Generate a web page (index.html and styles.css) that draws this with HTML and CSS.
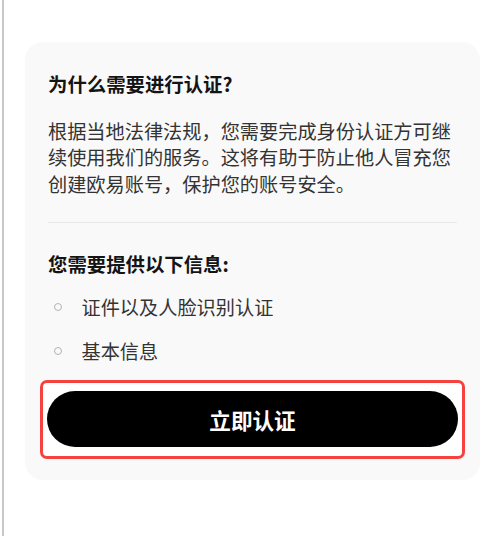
FILE: index.html
```html
<!DOCTYPE html>
<html lang="zh-CN">
<head>
<meta charset="utf-8">
<title>认证</title>
<link rel="stylesheet" href="styles.css">
</head>
<body>
<div class="frame">
  <section class="card">
    <h2 class="title">为什么需要进行认证?</h2>
    <p class="desc">根据当地法律法规，您需要完成身份认证方可继续使用我们的服务。这将有助于防止他人冒充您创建欧易账号，保护您的账号安全。</p>
    <div class="divider"></div>
    <h2 class="subtitle">您需要提供以下信息:</h2>
    <ul class="list">
      <li class="item"><span class="dot"></span><span>证件以及人脸识别认证</span></li>
      <li class="item"><span class="dot"></span><span>基本信息</span></li>
    </ul>
    <div class="highlight">
      <button class="btn">立即认证</button>
    </div>
  </section>
</div>
</body>
</html>
```
FILE: styles.css
```css
html, body {
  margin: 0;
  padding: 0;
  background: #ffffff;
}
body {
  font-family: "Noto Sans CJK SC", "Noto Sans", sans-serif;
  color: #333333;
}
.frame {
  margin-left: 2px;
  border-left: 2px solid #c8c8c8;
  height: 536px;
  box-sizing: border-box;
  padding-top: 42px;
  padding-left: 21px;
}
.card {
  width: 455px;
  height: 438px;
  box-sizing: border-box;
  background: #f9f9f9;
  border-radius: 18px;
  padding: 29px 23px 21px 23px;
  display: flex;
  flex-direction: column;
}
.title, .subtitle {
  margin: 0;
  font-size: 19.4px;
  line-height: 26.5px;
  font-weight: 700;
  color: #141414;
}
.desc {
  margin: 20px 0 0 0;
  font-size: 19.2px;
  line-height: 26.5px;
  color: #333333;
}
.divider {
  margin-top: 25px;
  height: 1px;
  background: #e9e9e9;
}
.subtitle {
  margin-top: 28px;
}
.list {
  list-style: none;
  margin: 16.5px 0 0 0;
  padding: 0;
  display: flex;
  flex-direction: column;
  gap: 17.5px;
}
.item {
  display: flex;
  align-items: center;
  font-size: 19.2px;
  line-height: 26.5px;
  color: #333333;
}
.dot {
  width: 8px;
  height: 8px;
  box-sizing: border-box;
  border: 1.5px solid #b4b4b4;
  border-radius: 50%;
  margin-left: 6px;
  margin-right: 19.5px;
  flex: none;
}
.highlight {
  margin: 15.5px -8px 0 -8px;
  border: 3px solid #f4433f;
  border-radius: 7px;
  padding: 8px 4px 9px 4px;
  background: #ffffff;
}
.btn {
  display: block;
  width: 100%;
  height: 56px;
  border: none;
  border-radius: 28px;
  background: #000000;
  color: #ffffff;
  font-family: "Noto Sans CJK SC", "Noto Sans", sans-serif;
  font-size: 21.6px;
  font-weight: 700;
  padding: 0;
  cursor: pointer;
}
```
